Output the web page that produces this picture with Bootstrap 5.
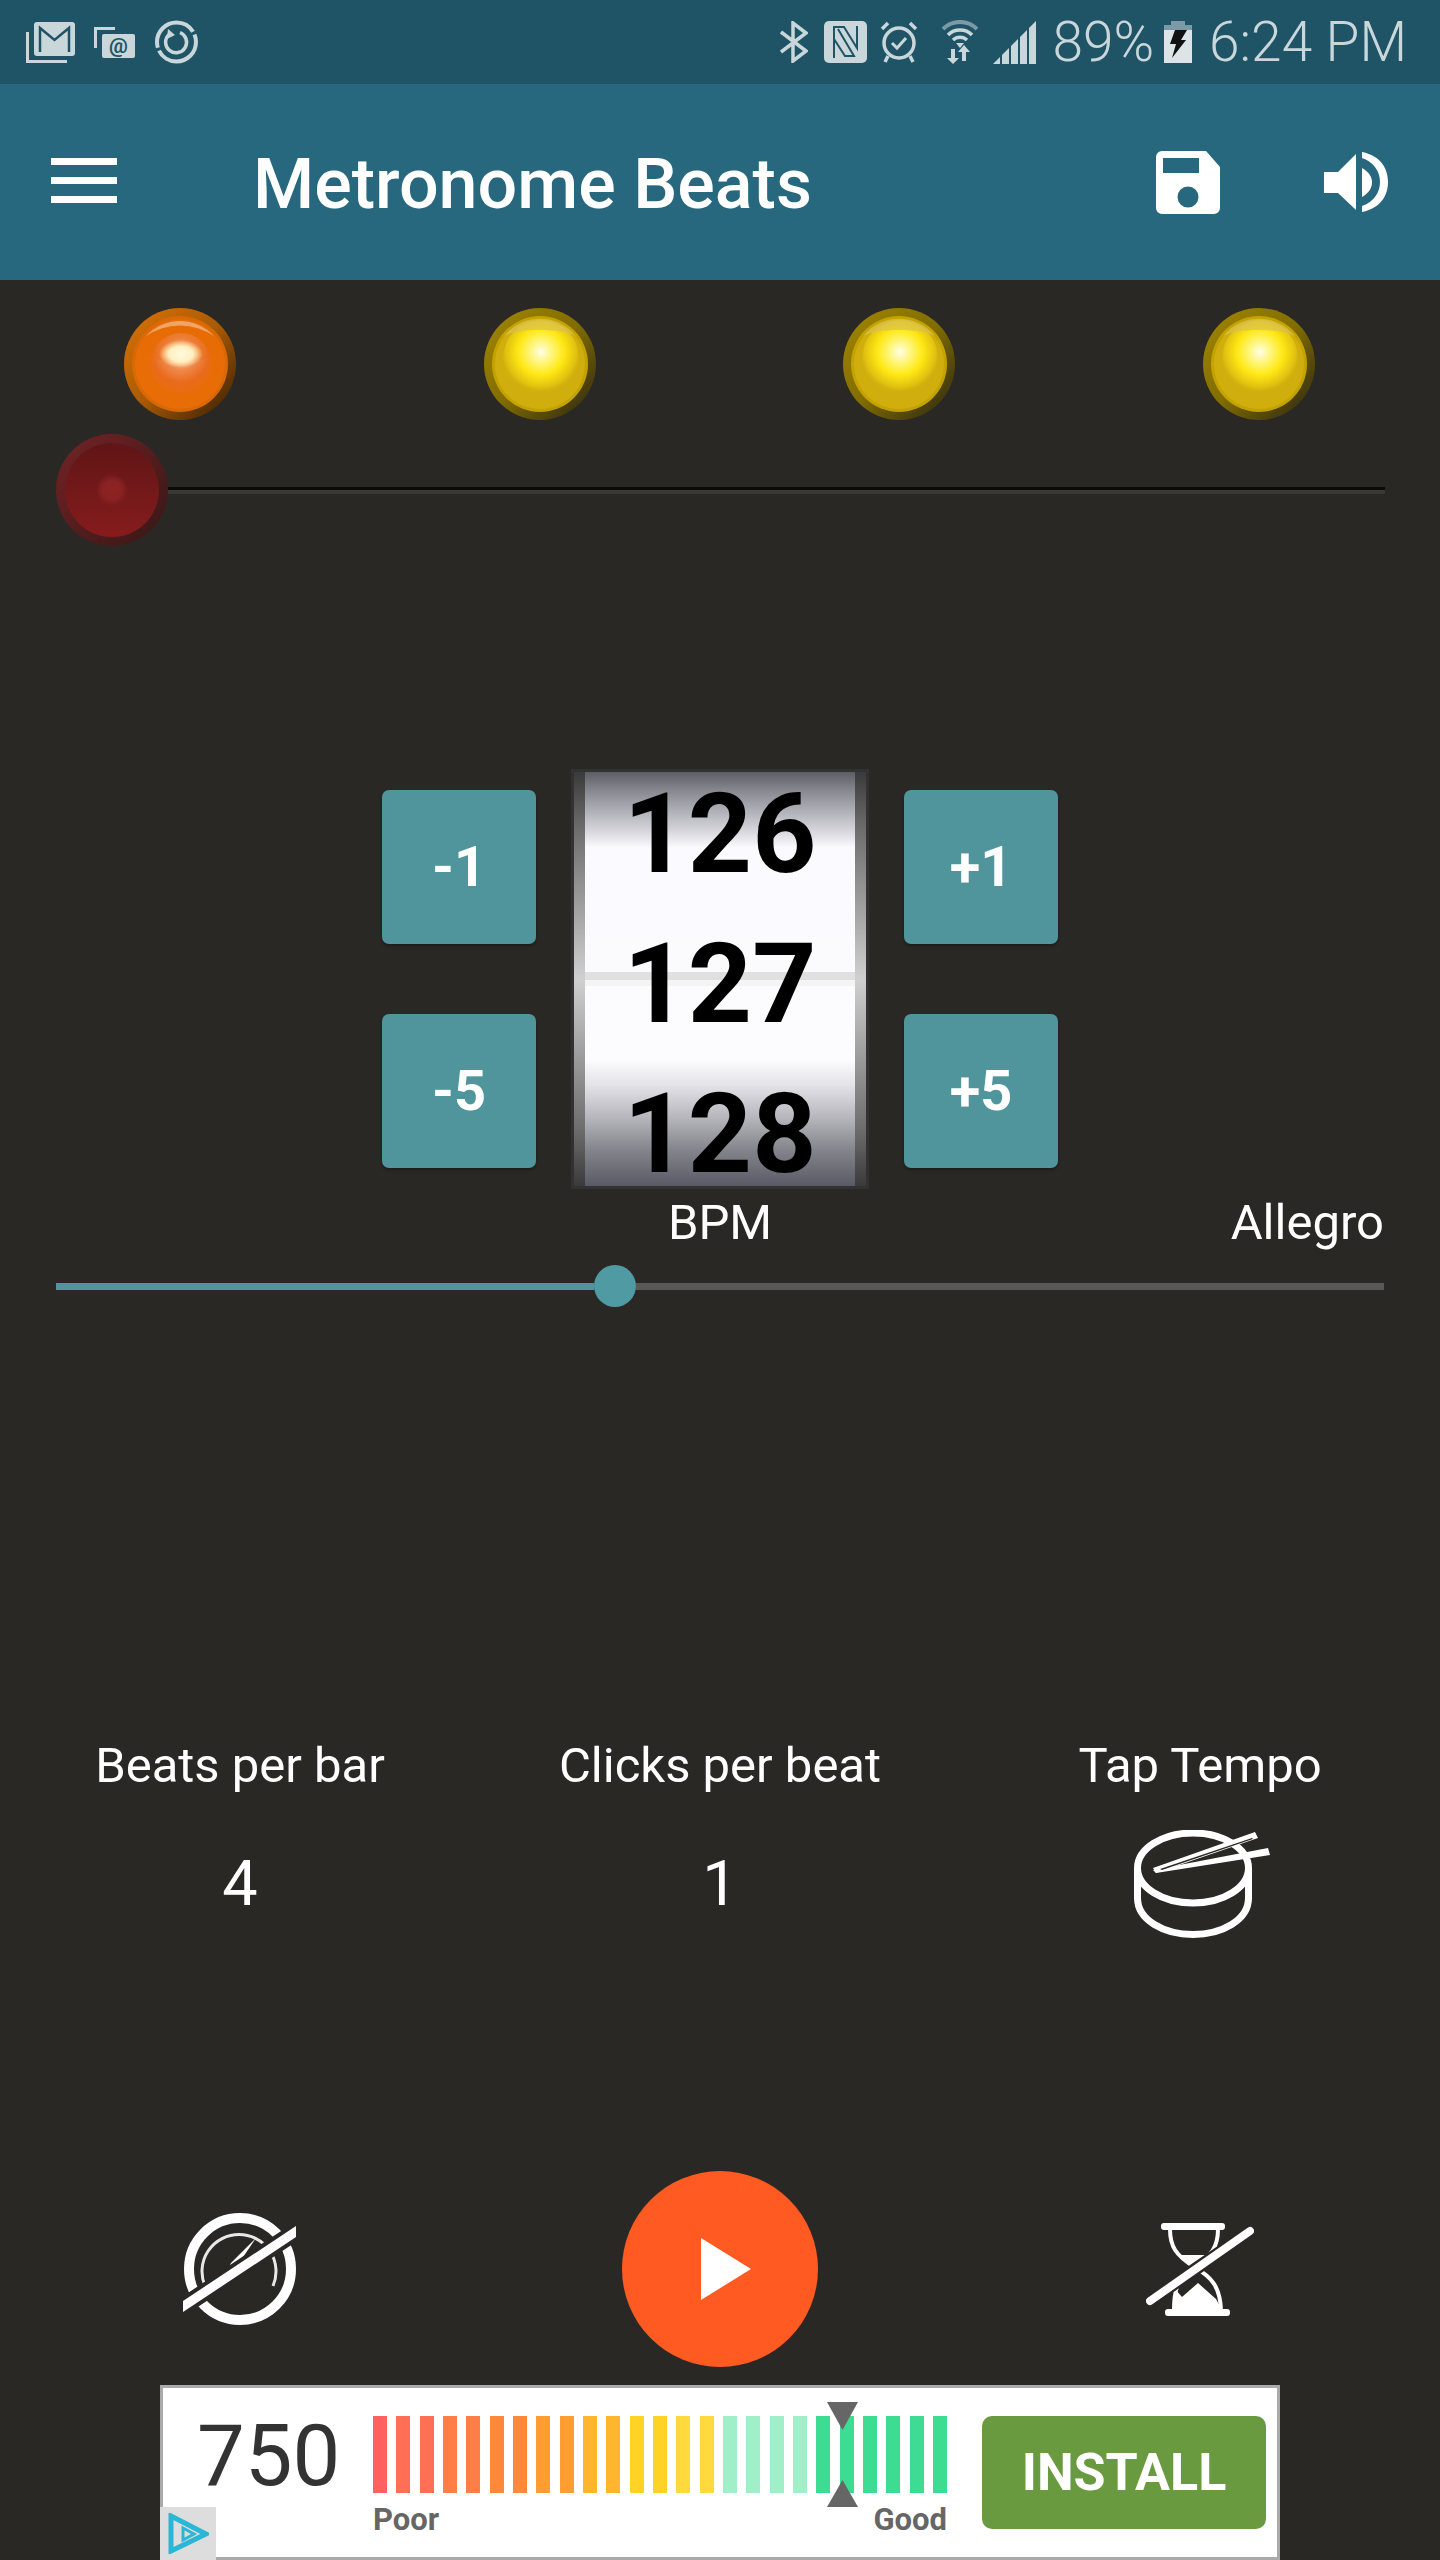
<!DOCTYPE html>
<html lang="en">
<head>
  <meta charset="UTF-8">
  <title>Metronome Beats</title>
  <meta name="viewport" content="width=device-width, initial-scale=1">
  <link href="https://cdn.jsdelivr.net/npm/bootstrap@5.3.2/dist/css/bootstrap.min.css" rel="stylesheet">
  <style>
    body {
      background: #2a2825;
      color: #fff;
      font-family: Roboto, "Liberation Sans", sans-serif;
    }
    svg { display: block; flex: none; }

    .phone { width: 1440px; height: 2560px; overflow: hidden; }

    /* status bar */
    .status-bar { height: 84px; background: #1f5467; color: #c9d6da; padding: 0 33px 0 26px; }
    .status-left { gap: 19px; }
    .status-right { gap: 10px; }
    .status-text { font-size: 55px; font-weight: 300; line-height: 84px; }
    .gap-bt { margin-right: 6px; }
    .gap-nfc { margin-right: 3px; }
    .gap-alarm { margin-right: 13px; }
    .gap-wifi { margin-right: 4px; }
    .gap-signal { margin-right: 6px; }
    .gap-battery { margin-right: 7px; }

    /* toolbar */
    .app-bar { height: 196px; background: #27687f; padding: 0; flex-wrap: nowrap; }
    .menu-btn { margin: 0 136px 3px 51px; }
    .app-title { font-size: 70px; font-weight: 500; line-height: 192px; margin-top: 4px; color: #fff; }
    .bar-actions { gap: 104px; margin-right: 52px; }

    /* beat lights */
    .lights { padding: 28px 125px 0 124px; }
    .lamp { width: 112px; height: 112px; }
    .seek-wrap { position: relative; margin: 14px 55px 0 56px; height: 112px; }
    .seek-track { height: 7px; background: linear-gradient(#0b0a09 0 3px, #3b3832 3px 7px); }
    .seek-knob { position: absolute; left: 0; top: 0; }

    /* tempo picker */
    .tempo { margin-top: 223px; gap: 35px; }
    .step-col { padding-top: 21px; gap: 70px; }
    .step-btn {
      width: 154px; height: 154px; padding: 0; border: 0; border-radius: 7px;
      background: #4f959b; color: #fff; font-size: 56px; font-weight: 700;
      box-shadow: 0 2px 3px rgba(0,0,0,.3);
    }
    .wheel {
      width: 298px; height: 420px; padding: 3px 3px; background: #333232;
    }
    .wheel-frame {
      height: 414px; padding: 0 11px;
      background: linear-gradient(#3a3a3a, #6e6e6e 14%, #a6a6a6 35%, #d0d0d0 50%, #a6a6a6 65%, #6e6e6e 86%, #3a3a3a);
    }
    .wheel-face {
      height: 414px; padding-top: 12px; gap: 50px; overflow: hidden; text-align: center; color: #000;
      background: linear-gradient(#5d5d66 0, #86868e 18px, #aeaeb6 38px, #d4d4da 58px, #fafaff 76px, #fbfbfe 200px,
        #e0e0e0 200px, #e0e0e0 208px, #f4f4f4 208px, #f4f4f4 214px, #fcfcfe 214px, #fcfcfe 288px,
        #e4e4e9 312px, #b8b8be 344px, #84848c 378px, #5a5a66 414px);
    }
    .wheel-num { height: 100px; font-size: 112px; font-weight: 700; line-height: 100px; }

    .tempo-labels { margin: 4px 56px 0; height: 60px; font-size: 49px; line-height: 60px; }
    .tempo-labels > div { flex: 1 1 0; }

    /* bpm slider */
    .bpm-slider { margin: 12px 56px 0; height: 42px; }
    .bpm-done { width: 538px; height: 7px; background: #4f959b; }
    .bpm-thumb { width: 42px; height: 42px; background: #4f9aa3; flex: none; }
    .bpm-rest { height: 7px; background: #5a5856; }

    /* settings */
    .settings { margin-top: 429px; text-align: center; }
    .setting-label { font-size: 49px; line-height: 60px; }
    .setting-value { height: 108px; margin-top: 34px; font-size: 63px; }

    /* transport */
    .transport { margin-top: 233px; }
    .play-btn { width: 196px; height: 196px; background: #ff5a22; padding: 0; border: 0; }
    .play-btn svg { margin-left: 12px; }

    /* ad */
    .ad-box {
      position: relative; width: 1120px; height: 175px; margin: 18px auto 0;
      background: #fff; border: 3px solid #aaa; color: #333;
    }
    .ad-score { width: 210px; padding-left: 34px; font-size: 85px; line-height: 100px; padding-top: 18px; flex: none; }
    .ad-meter { position: relative; width: 574px; padding-top: 28px; flex: none; }
    .ad-bars { height: 77px; }
    .ad-bar { width: 14px; }
    .tone-1 { background: #ff6161; }
    .tone-2 { background: #ff6f55; }
    .tone-3 { background: #ff7d47; }
    .tone-4 { background: #ff883b; }
    .tone-5 { background: #ff9d33; }
    .tone-6 { background: #ffb52e; }
    .tone-7 { background: #ffd326; }
    .tone-8 { background: #ffda3e; }
    .tone-9 { background: #a0efc8; }
    .tone-10 { background: #3ddc92; }
    .ad-scale { font-size: 31px; font-weight: 700; color: #666; line-height: 32px; margin-top: 11px; }
    .ad-pointer { position: absolute; left: 454px; }
    .ad-pointer-top { top: 14px; }
    .ad-pointer-bottom { top: 92px; }
    .ad-install {
      width: 284px; height: 113px; margin: 28px 0 0 35px; padding: 0; border: 0; border-radius: 10px;
      background: #6a9a40; color: #fff; font-size: 52px; font-weight: 700; flex: none;
    }
    .ad-choice { position: absolute; left: -3px; bottom: -3px; width: 56px; height: 53px; background: #ddd; }
  </style>
</head>

<body>
  <div class="phone d-flex flex-column">

    <div class="status-bar d-flex align-items-center justify-content-between">
      <div class="status-left d-flex align-items-center">
        <svg width="49" height="41" viewBox="0 0 49 41">
          <path d="M1.500 10V39.500H41" fill="none" stroke="#c9d6da" stroke-width="3"/>
          <rect x="8" y="0" width="41" height="34" rx="3" fill="#c9d6da"/>
          <path d="M14 30V6L28.500 18L43 6V30" fill="none" stroke="#1f5467" stroke-width="2.500"/>
        </svg>
        <svg width="41" height="31" viewBox="0 0 41 31">
          <path d="M1.500 21V1.500H21" fill="none" stroke="#c9d6da" stroke-width="3"/>
          <rect x="8" y="7" width="33" height="24" rx="2" fill="#c9d6da"/>
          <text x="24.500" y="26" font-size="21" font-weight="700" text-anchor="middle" fill="#1f5467" font-family="Roboto, sans-serif">@</text>
        </svg>
        <svg width="45" height="44" viewBox="0 0 45 44">
          <circle cx="22.500" cy="22" r="19.500" fill="none" stroke="#c9d6da" stroke-width="4" stroke-dasharray="52 3 56 3 8 0"/>
          <path d="M26 12.500A10.500 10.500 0 1 1 15 14.500" fill="none" stroke="#c9d6da" stroke-width="3.500"/>
          <path d="M14 9L21 15L13 19Z" fill="#c9d6da"/>
        </svg>
      </div>

      <div class="status-right d-flex align-items-center">
        <svg class="gap-bt" width="28" height="42" viewBox="0 0 28 42">
          <path d="M1 11L26 30L13 40V2L26 12L1 31" fill="none" stroke="#c9d6da" stroke-width="3.500"/>
        </svg>
        <svg class="gap-nfc" width="43" height="42" viewBox="0 0 43 42">
          <rect width="43" height="42" rx="5" fill="#c9d6da"/>
          <path d="M10 37V6H20L33 27V5M14 8L30 35H21L10 18" fill="none" stroke="#1f5467" stroke-width="2"/>
        </svg>
        <svg class="gap-alarm" width="38" height="42" viewBox="0 0 38 42">
          <circle cx="19" cy="22" r="15" fill="none" stroke="#c9d6da" stroke-width="3.500"/>
          <path d="M2 8L8 2M36 8L30 2M8 35L5 41M30 35L33 41" fill="none" stroke="#c9d6da" stroke-width="3.500"/>
          <path d="M12 22L17 27L26 17" fill="none" stroke="#c9d6da" stroke-width="3"/>
        </svg>
        <svg class="gap-wifi" width="38" height="44" viewBox="0 0 38 44">
          <path d="M2 9A24 24 0 0 1 36 9" fill="none" stroke="#7b9aa5" stroke-width="4"/>
          <path d="M7 15A17 17 0 0 1 31 15" fill="none" stroke="#c9d6da" stroke-width="3.500"/>
          <path d="M12 20A10 10 0 0 1 26 20" fill="none" stroke="#c9d6da" stroke-width="3.500"/>
          <path d="M15 23H23L19 28Z" fill="#c9d6da"/>
          <path d="M10 29H14V38H18L12 44L6 38H10ZM23 25L29 32H25V41H21V32H17Z" fill="#c9d6da"/>
        </svg>
        <svg class="gap-signal" width="43" height="43" viewBox="0 0 43 43">
          <polygon points="0,43 7,36 7,43" fill="#c9d6da"/>
          <polygon points="9,34 16,27 16,43 9,43" fill="#c9d6da"/>
          <polygon points="18,25 25,18 25,43 18,43" fill="#c9d6da"/>
          <polygon points="27,16 34,9 34,43 27,43" fill="#c9d6da"/>
          <polygon points="36,7 43,0 43,43 36,43" fill="#c9d6da"/>
        </svg>
        <span class="status-text">89%</span>
        <svg class="gap-battery" width="28" height="42" viewBox="0 0 28 42">
          <path d="M7 0H21V4H28V9H0V4H7Z" fill="#7b9aa5"/>
          <rect y="9" width="28" height="33" fill="#dce4e7"/>
          <path d="M11 9H23L17 19H22L8 37L12 23H6Z" fill="#111"/>
        </svg>
        <span class="status-text">6:24 PM</span>
      </div>
    </div>

    <nav class="navbar app-bar">
      <div class="d-flex align-items-center">
        <svg class="menu-btn" width="66" height="45" viewBox="0 0 66 45" fill="#fff">
          <rect width="66" height="7"/><rect y="19" width="66" height="7"/><rect y="38" width="66" height="7"/>
        </svg>
        <span class="app-title">Metronome Beats</span>
      </div>
      <div class="bar-actions d-flex align-items-center">
        <svg width="64" height="63" viewBox="0 0 64 63">
          <path fill="#fff" fill-rule="evenodd" d="M6 0H50L64 16V57A6 6 0 0 1 58 63H6A6 6 0 0 1 0 57V6A6 6 0 0 1 6 0ZM7 7V22H43V7ZM32 35.500A10.500 10.500 0 1 0 32 56.500A10.500 10.500 0 1 0 32 35.500Z"/>
        </svg>
        <svg width="64" height="60" viewBox="0 0 64 60" fill="#fff">
          <polygon points="0,20 14,20 32,2 32,58 14,41 0,41"/>
          <path d="M38 0C58 4 64 18 64 30C64 42 58 56 38 60V54C50 50 56 40 56 30C56 20 50 10 38 6Z"/>
          <path d="M38 16C45 20 48 25 48 30C48 36 45 41 38 45Z"/>
        </svg>
      </div>
    </nav>

    <div class="lights d-flex justify-content-between">
      <svg class="lamp" viewBox="0 0 112 112">
        <defs>
          <linearGradient id="orangeRim" x1="0.1" y1="0.1" x2="0.9" y2="0.9">
            <stop offset="0" stop-color="#d06e05"/><stop offset=".5" stop-color="#a85a05"/><stop offset="1" stop-color="#4a2805"/>
          </linearGradient>
          <radialGradient id="orangeGlow" cx=".5" cy=".35" r=".6">
            <stop offset="0" stop-color="#fbd3a8"/><stop offset=".45" stop-color="#f0874a"/><stop offset=".8" stop-color="#e96a1a"/><stop offset="1" stop-color="#ea6c12"/>
          </radialGradient>
          <radialGradient id="orangeSpot">
            <stop offset="0" stop-color="#fffbe0"/><stop offset=".55" stop-color="#fff0c0"/><stop offset="1" stop-color="#fff0c0" stop-opacity="0"/>
          </radialGradient>
          <linearGradient id="yellowRim" x1="0.1" y1="0.1" x2="0.9" y2="0.9">
            <stop offset="0" stop-color="#9c8200"/><stop offset=".5" stop-color="#806c00"/><stop offset="1" stop-color="#3a3210"/>
          </linearGradient>
          <radialGradient id="yellowGlow" cx=".5" cy=".42" r=".55">
            <stop offset="0" stop-color="#fffde8"/><stop offset=".25" stop-color="#fff680"/><stop offset=".55" stop-color="#ffe814"/><stop offset=".85" stop-color="#e0c010"/><stop offset="1" stop-color="#cfae0e" stop-opacity="0"/>
          </radialGradient>
          <linearGradient id="redRim" x1="0.1" y1="0.1" x2="0.9" y2="0.9">
            <stop offset="0" stop-color="#6e2224"/><stop offset="1" stop-color="#3c1818"/>
          </linearGradient>
          <linearGradient id="redFace" x1="0" y1="0" x2="0" y2="1">
            <stop offset="0" stop-color="#601516"/><stop offset="1" stop-color="#861c1c"/>
          </linearGradient>
          <radialGradient id="redDot">
            <stop offset="0" stop-color="#8e2424"/><stop offset=".6" stop-color="#8a2222"/><stop offset="1" stop-color="#8a2222" stop-opacity="0"/>
          </radialGradient>
        </defs>
        <circle cx="56" cy="56" r="56" fill="url(#orangeRim)"/>
        <circle cx="56" cy="56" r="48" fill="#d96806"/>
        <circle cx="56" cy="56" r="45" fill="#e96d06"/>
        <circle cx="57" cy="55" r="30" fill="url(#orangeGlow)"/>
        <path d="M14 40A45 45 0 0 1 98 40C92 58 20 58 14 40Z" fill="#e96d06" opacity=".25"/>
        <path d="M22 28A46 46 0 0 1 90 28A60 60 0 0 0 22 28Z" fill="#efa468"/>
        <ellipse cx="57" cy="46" rx="22" ry="14" fill="url(#orangeSpot)"/>
      </svg>
      <svg class="lamp" viewBox="0 0 112 112">
        <circle cx="56" cy="56" r="56" fill="url(#yellowRim)"/>
        <circle cx="56" cy="56" r="48" fill="#c4a300"/>
        <circle cx="56" cy="56" r="45" fill="#cfae0e"/>
        <circle cx="57" cy="50" r="38" fill="url(#yellowGlow)"/>
        <path d="M20 28A46 46 0 0 1 92 28C78 20 34 20 20 28Z" fill="#d8c050" opacity=".7"/>
      </svg>
      <svg class="lamp" viewBox="0 0 112 112">
        <circle cx="56" cy="56" r="56" fill="url(#yellowRim)"/>
        <circle cx="56" cy="56" r="48" fill="#c4a300"/>
        <circle cx="56" cy="56" r="45" fill="#cfae0e"/>
        <circle cx="57" cy="50" r="38" fill="url(#yellowGlow)"/>
        <path d="M20 28A46 46 0 0 1 92 28C78 20 34 20 20 28Z" fill="#d8c050" opacity=".7"/>
      </svg>
      <svg class="lamp" viewBox="0 0 112 112">
        <circle cx="56" cy="56" r="56" fill="url(#yellowRim)"/>
        <circle cx="56" cy="56" r="48" fill="#c4a300"/>
        <circle cx="56" cy="56" r="45" fill="#cfae0e"/>
        <circle cx="57" cy="50" r="38" fill="url(#yellowGlow)"/>
        <path d="M20 28A46 46 0 0 1 92 28C78 20 34 20 20 28Z" fill="#d8c050" opacity=".7"/>
      </svg>
    </div>

    <div class="seek-wrap d-flex align-items-center">
      <div class="seek-track w-100"></div>
      <svg class="seek-knob" width="112" height="112" viewBox="0 0 112 112">
        <circle cx="56" cy="56" r="56" fill="url(#redRim)"/>
        <circle cx="56" cy="56" r="47" fill="url(#redFace)"/>
        <circle cx="56" cy="56" r="16" fill="url(#redDot)"/>
      </svg>
    </div>

    <div class="tempo d-flex justify-content-center">
      <div class="step-col d-flex flex-column">
        <button class="step-btn btn">-1</button>
        <button class="step-btn btn">-5</button>
      </div>
      <div class="wheel">
        <div class="wheel-frame">
          <div class="wheel-face d-flex flex-column">
            <div class="wheel-num">126</div>
            <div class="wheel-num">127</div>
            <div class="wheel-num">128</div>
          </div>
        </div>
      </div>
      <div class="step-col d-flex flex-column">
        <button class="step-btn btn">+1</button>
        <button class="step-btn btn">+5</button>
      </div>
    </div>

    <div class="tempo-labels d-flex">
      <div></div>
      <div class="text-center">BPM</div>
      <div class="text-end">Allegro</div>
    </div>

    <div class="bpm-slider d-flex align-items-center">
      <div class="bpm-done"></div>
      <div class="bpm-thumb rounded-circle"></div>
      <div class="bpm-rest flex-fill"></div>
    </div>

    <div class="settings row g-0">
      <div class="col-4">
        <div class="setting-label">Beats per bar</div>
        <div class="setting-value d-flex align-items-center justify-content-center">4</div>
      </div>
      <div class="col-4">
        <div class="setting-label">Clicks per beat</div>
        <div class="setting-value d-flex align-items-center justify-content-center">1</div>
      </div>
      <div class="col-4">
        <div class="setting-label">Tap Tempo</div>
        <div class="setting-value d-flex align-items-center justify-content-center">
          <svg class="ms-1" width="137" height="108" viewBox="0 0 137 108">
            <ellipse cx="59" cy="38" rx="55.500" ry="35" fill="none" stroke="#fff" stroke-width="7"/>
            <path d="M3.500 38V68C3.500 90 30 104.500 59 104.500C88 104.500 114.500 90 114.500 68V38" fill="none" stroke="#fff" stroke-width="7"/>
            <polygon points="19,38 121,2 124,8 22,43" fill="#fff"/>
            <polygon points="19,40 134,18 136,25 22,43" fill="#fff"/>
            <polygon points="26,39 118,8 119,9 28,40" fill="#2a2825"/>
          </svg>
        </div>
      </div>
    </div>

    <div class="transport row g-0 align-items-center">
      <div class="col-4 d-flex justify-content-center">
        <svg width="114" height="112" viewBox="0 0 114 112">
          <circle cx="57" cy="56" r="51" fill="none" stroke="#fff" stroke-width="10"/>
          <path d="M90 73A37 37 0 1 0 22 73" fill="none" stroke="#e8e8e8" stroke-width="3"/>
          <path d="M73 25L54 53L44 73L40 68L48 50Z" fill="#fff"/>
          <polygon points="0,88 113,13 113,24 0,99" fill="#fff" stroke="#2a2825" stroke-width="8" paint-order="stroke"/>
        </svg>
      </div>
      <div class="col-4 d-flex justify-content-center">
        <button class="play-btn btn rounded-circle d-flex align-items-center justify-content-center">
          <svg width="50" height="62" viewBox="0 0 50 62"><polygon points="0,0 50,31 0,62" fill="#fff"/></svg>
        </button>
      </div>
      <div class="col-4 d-flex justify-content-center">
        <svg width="108" height="93" viewBox="0 0 108 93">
          <rect x="15" width="64" height="7" rx="3" fill="#fff"/>
          <rect x="19" y="86" width="65" height="7" rx="3" fill="#fff"/>
          <path d="M24 6C24 24 30 32 48 44C66 54 74 64 75 87M72 6C72 24 66 32 48 44C32 54 28 66 28 87" fill="none" stroke="#fff" stroke-width="4"/>
          <path d="M32 32H64C60 38 56 40 52 44H46C42 40 36 38 32 32Z" fill="#fff"/>
          <path d="M27 87L29 66L36 74L52 60L70 76L76 87Z" fill="#fff"/>
          <line x1="3" y1="78" x2="105" y2="8" stroke="#2a2825" stroke-width="13"/>
          <line x1="4" y1="78" x2="104" y2="8" stroke="#fff" stroke-width="8" stroke-linecap="round"/>
        </svg>
      </div>
    </div>

    <div class="ad-box d-flex">
      <div class="ad-score">750</div>
      <div class="ad-meter">
        <div class="ad-bars d-flex justify-content-between">
          <div class="ad-bar tone-1"></div>
          <div class="ad-bar tone-2"></div>
          <div class="ad-bar tone-2"></div>
          <div class="ad-bar tone-3"></div>
          <div class="ad-bar tone-3"></div>
          <div class="ad-bar tone-4"></div>
          <div class="ad-bar tone-4"></div>
          <div class="ad-bar tone-5"></div>
          <div class="ad-bar tone-5"></div>
          <div class="ad-bar tone-6"></div>
          <div class="ad-bar tone-6"></div>
          <div class="ad-bar tone-7"></div>
          <div class="ad-bar tone-7"></div>
          <div class="ad-bar tone-8"></div>
          <div class="ad-bar tone-8"></div>
          <div class="ad-bar tone-9"></div>
          <div class="ad-bar tone-9"></div>
          <div class="ad-bar tone-9"></div>
          <div class="ad-bar tone-9"></div>
          <div class="ad-bar tone-10"></div>
          <div class="ad-bar tone-10"></div>
          <div class="ad-bar tone-10"></div>
          <div class="ad-bar tone-10"></div>
          <div class="ad-bar tone-10"></div>
          <div class="ad-bar tone-10"></div>
        </div>
        <div class="ad-scale d-flex justify-content-between"><span>Poor</span><span>Good</span></div>
        <svg class="ad-pointer ad-pointer-top" width="31" height="28" viewBox="0 0 31 28"><polygon points="0,0 31,0 15.500,28" fill="#666"/></svg>
        <svg class="ad-pointer ad-pointer-bottom" width="31" height="27" viewBox="0 0 31 27"><polygon points="15.500,0 31,27 0,27" fill="#666"/></svg>
      </div>
      <button class="ad-install btn">INSTALL</button>
      <div class="ad-choice d-flex align-items-center justify-content-center">
        <svg width="41" height="41" viewBox="0 0 41 41">
          <polygon points="3,3 38,21 3,38" fill="none" stroke="#2bb6d6" stroke-width="5"/>
          <polygon points="15,15 26,21 15,27" fill="none" stroke="#2bb6d6" stroke-width="3"/>
        </svg>
      </div>
    </div>

  </div>
  <script src="https://cdn.jsdelivr.net/npm/bootstrap@5.3.2/dist/js/bootstrap.bundle.min.js"></script>
</body>
</html>
